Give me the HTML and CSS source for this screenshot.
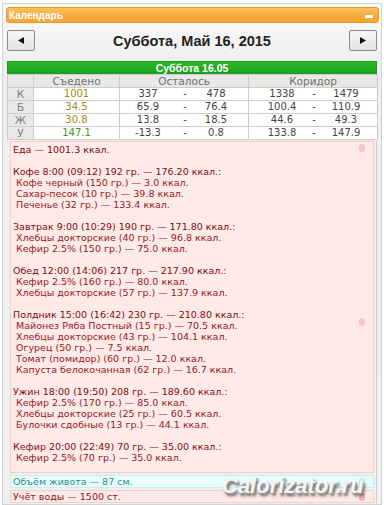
FILE: index.html
```html
<!DOCTYPE html>
<html lang="ru">
<head>
    <meta charset="UTF-8">
    <meta name="viewport" content="width=device-width, initial-scale=1.0">
    <title>Календарь</title>
    <link rel="stylesheet" href="styles.css">
</head>
<body>
    <div class="widget">
        <div class="widget-head">
            <span class="widget-title">Календарь</span>
            <span class="widget-min"></span>
        </div>

        <div class="daynav">
            <button class="navbtn">
                <svg width="6" height="7" viewBox="0 0 6 7"><polygon points="6,0 6,7 0,3.5" fill="#111"/></svg>
            </button>
            <div class="daytitle">Суббота, Май 16, 2015</div>
            <button class="navbtn">
                <svg width="6" height="7" viewBox="0 0 6 7"><polygon points="0,0 0,7 6,3.5" fill="#111"/></svg>
            </button>
        </div>

        <div class="daybar">Суббота 16.05</div>

        <table class="summary">
            <tr class="head">
                <th class="lbl"></th>
                <th>Съедено</th>
                <th>Осталось</th>
                <th>Коридор</th>
            </tr>
            <tr>
                <td class="lbl">К</td>
                <td class="eaten warn">1001</td>
                <td class="range left"><span>337</span><span>-</span><span>478</span></td>
                <td class="range right"><span>1338</span><span>-</span><span>1479</span></td>
            </tr>
            <tr>
                <td class="lbl">Б</td>
                <td class="eaten warn">34.5</td>
                <td class="range left"><span>65.9</span><span>-</span><span>76.4</span></td>
                <td class="range right"><span>100.4</span><span>-</span><span>110.9</span></td>
            </tr>
            <tr>
                <td class="lbl">Ж</td>
                <td class="eaten warn">30.8</td>
                <td class="range left"><span>13.8</span><span>-</span><span>18.5</span></td>
                <td class="range right"><span>44.6</span><span>-</span><span>49.3</span></td>
            </tr>
            <tr>
                <td class="lbl">У</td>
                <td class="eaten ok">147.1</td>
                <td class="range left"><span>-13.3</span><span>-</span><span>0.8</span></td>
                <td class="range right"><span>133.8</span><span>-</span><span>147.9</span></td>
            </tr>
        </table>

        <div class="notes">
            <div class="note note-food">
                <p class="meal">Еда — 1001.3 ккал.</p>
                <br>
                <p class="meal">Кофе 8:00 (09:12) 192 гр. — 176.20 ккал.:</p>
                <p class="item">Кофе черный (150 гр.) — 3.0 ккал.</p>
                <p class="item">Сахар-песок (10 гр.) — 39.8 ккал.</p>
                <p class="item">Печенье (32 гр.) — 133.4 ккал.</p>
                <br>
                <p class="meal">Завтрак 9:00 (10:29) 190 гр. — 171.80 ккал.:</p>
                <p class="item">Хлебцы докторские (40 гр.) — 96.8 ккал.</p>
                <p class="item">Кефир 2.5% (150 гр.) — 75.0 ккал.</p>
                <br>
                <p class="meal">Обед 12:00 (14:06) 217 гр. — 217.90 ккал.:</p>
                <p class="item">Кефир 2.5% (160 гр.) — 80.0 ккал.</p>
                <p class="item">Хлебцы докторские (57 гр.) — 137.9 ккал.</p>
                <br>
                <p class="meal">Полдник 15:00 (16:42) 230 гр. — 210.80 ккал.:</p>
                <p class="item">Майонез Ряба Постный (15 гр.) — 70.5 ккал.</p>
                <p class="item">Хлебцы докторские (43 гр.) — 104.1 ккал.</p>
                <p class="item">Огурец (50 гр.) — 7.5 ккал.</p>
                <p class="item">Томат (помидор) (60 гр.) — 12.0 ккал.</p>
                <p class="item">Капуста белокочанная (62 гр.) — 16.7 ккал.</p>
                <br>
                <p class="meal">Ужин 18:00 (19:50) 208 гр. — 189.60 ккал.:</p>
                <p class="item">Кефир 2.5% (170 гр.) — 85.0 ккал.</p>
                <p class="item">Хлебцы докторские (25 гр.) — 60.5 ккал.</p>
                <p class="item">Булочки сдобные (13 гр.) — 44.1 ккал.</p>
                <br>
                <p class="meal">Кефир 20:00 (22:49) 70 гр. — 35.00 ккал.:</p>
                <p class="item">Кефир 2.5% (70 гр.) — 35.0 ккал.</p>
                <span class="note-icon icon-top"></span>
                <span class="note-icon icon-mid"></span>
            </div>
            <div class="note note-belly">
                Объём живота — 87 см.
                <span class="note-icon"></span>
            </div>
            <div class="note note-water">
                Учёт воды — 1500 ст.
                <span class="note-icon"></span>
            </div>
        </div>

        <div class="watermark">Calorizator.ru</div>
    </div>
</body>
</html>
```

FILE: styles.css
```css
body {
    margin: 0;
    padding: 0;
    background-color: #fff;
    font-family: "DejaVu Sans", Verdana, sans-serif;
}

.widget {
    position: relative;
    width: 380px;
    box-sizing: border-box;
    margin: 3px 2px 0 2px;
    padding: 3px 2px 1px 3px;
    border: 1px solid #d3d3d3;
    background: linear-gradient(#fbfbfb, #efefef 60px, #f0f0f0);
}

.widget-head {
    height: 14px;
    display: flex;
    align-items: center;
    justify-content: space-between;
    padding: 0 5px 0 2px;
    border: 1px solid #e8981f;
    border-radius: 3px;
    background: linear-gradient(#f9c062, #f6ad3e 50%, #f5a835);
}

.widget-title {
    color: #fff;
    font-family: "Liberation Sans", Arial, sans-serif;
    font-weight: bold;
    font-size: 10px;
}

.widget-min {
    width: 8px;
    height: 3px;
    margin-top: 3px;
    border-radius: 1px;
    background-color: #fff;
}

.daynav {
    display: flex;
    align-items: center;
    justify-content: space-between;
    margin: 7px 2px 0 1px;
    height: 21px;
}

.navbtn {
    width: 28px;
    height: 21px;
    padding: 0;
    display: flex;
    align-items: center;
    justify-content: center;
    border: 1px solid #8a8a8a;
    border-radius: 2px;
    background: linear-gradient(#f7f7f7, #e2e2e2);
}

.daytitle {
    font-family: "Liberation Sans", Arial, sans-serif;
    font-weight: bold;
    font-size: 14.5px;
    color: #222;
}

.daybar {
    margin: 10px 2px 0 1px;
    height: 12px;
    line-height: 12px;
    text-align: center;
    color: #fff;
    font-family: "Liberation Sans", Arial, sans-serif;
    font-weight: bold;
    font-size: 10.5px;
    border: 1px solid #1d9a1d;
    border-bottom: none;
    background: linear-gradient(#2cb92c, #18a018);
}

.summary {
    width: 371px;
    margin-left: 1px;
    border-collapse: collapse;
    table-layout: fixed;
    font-size: 10px;
}

.summary th,
.summary td {
    height: 12px;
    padding: 0;
    border: 1px solid #cdcdcd;
    text-align: center;
    line-height: 12px;
}

.summary th {
    background-color: #e8e8e8;
    color: #707070;
    font-weight: normal;
    font-size: 10.5px;
}

.summary th.lbl,
.summary td.lbl {
    width: 25px;
    background-color: #e8e8e8;
    color: #808080;
    font-size: 10.5px;
}

.summary th:nth-child(2) {
    width: 85px;
}

.summary th:nth-child(3),
.summary th:nth-child(4) {
    width: 128px;
}

.summary td {
    background-color: #fff;
    color: #444;
}

.eaten.warn {
    color: #a48c18;
}

.eaten.ok {
    color: #3c9a2c;
}

.range {
    white-space: nowrap;
}

.range span {
    display: inline-block;
    text-align: center;
}

.range.left span:nth-child(1) {
    width: 50px;
    margin-left: 3px;
}

.range.left span:nth-child(2) {
    width: 24px;
}

.range.left span:nth-child(3) {
    width: 38px;
}

.range.right span:nth-child(1) {
    width: 50px;
    margin-left: 8px;
}

.range.right span:nth-child(2) {
    width: 14px;
}

.range.right span:nth-child(3) {
    width: 50px;
}

.summary .range {
    text-align: left;
}

.notes {
    margin: 1px 2px 0 1px;
    padding: 0 2px 0 3px;
    border-right: 1px solid #cfcfcf;
    display: flex;
    flex-direction: column;
    gap: 2px;
}

.note {
    position: relative;
    padding: 2px 2px 0 2px;
    font-size: 9.5px;
    line-height: 11px;
    border: 1px solid #f0cfcf;
    background-color: #ffeaea;
    color: #8e1414;
}

.note p {
    margin: 0;
    white-space: nowrap;
}

.note-food {
    padding-bottom: 9px;
}

.note .meal {
    color: #800c0c;
}

.note .item {
    padding-left: 3px;
    color: #962020;
}

.note-belly {
    padding: 0 2px;
    border-color: #c8eeee;
    background-color: #e8fcfc;
    color: #2e8f92;
}

.note-water {
    padding: 0 2px;
}

.note-icon {
    position: absolute;
    right: 8px;
    top: 2px;
    width: 6px;
    height: 8px;
    border-radius: 3px;
    background-color: #f0b8b8;
    opacity: 0.7;
}

.note-food .icon-mid {
    top: 176px;
}

.note-belly .note-icon {
    background-color: #b8e4e4;
}

.note-water .note-icon {
    background-color: #e89a9a;
}

.watermark {
    position: absolute;
    left: 219px;
    top: 469px;
    font-family: "Liberation Sans", Arial, sans-serif;
    font-weight: bold;
    font-style: italic;
    font-size: 22px;
    color: #f4f4f4;
    text-shadow: 1px 1px 0 #9a9a9a, 2px 3px 3px #555;
}
```
